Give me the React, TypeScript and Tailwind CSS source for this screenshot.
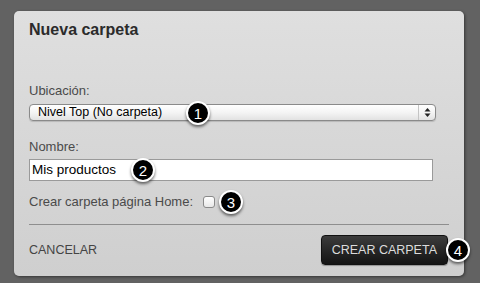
import React from 'react';

function Badge({ n, className }: { n: number; className: string }) {
  return (
    <span
      className={
        'absolute flex h-[24px] w-[24px] items-center justify-center rounded-full border-2 border-white bg-black text-[15px] leading-none text-white shadow-[0_2px_3px_rgba(0,0,0,0.55)] ' +
        className
      }
    >
      {n}
    </span>
  );
}

export default function App() {
  return (
    <div
      className="h-[283px] w-[480px] bg-[#626262] pt-[11px]"
      style={{ fontFamily: '"Liberation Sans", Arial, sans-serif' }}
    >
      <div className="ml-[14px] h-[265px] w-[450px] rounded-[5px] bg-gradient-to-b from-[#dfdfdf] to-[#cfcfcf] px-[15px] pt-[9px] shadow-[1px_1px_3px_rgba(0,0,0,0.45)]">
        <h1 className="text-[16px] font-bold leading-[19px] text-[#2b2b2b]">Nueva carpeta</h1>

        <div className="mt-[44px] text-[13px] leading-[16px] text-[#4a4a4a]">Ubicación:</div>
        <div className="relative mt-[5px] flex h-[17px] w-[407px] items-center rounded-[4px] border border-[#8a8a8a] bg-gradient-to-b from-white via-[#f4f4f4] to-[#e2e2e2] shadow-[0_1px_1px_rgba(0,0,0,0.15)]">
          <span className="flex-1 pl-[8px] text-[12.5px] leading-none text-black">Nivel Top (No carpeta)</span>
          <span className="flex h-full w-[17px] items-center justify-center border-l border-[#c4c4c4]">
            <svg width="7" height="11" viewBox="0 0 7 11">
              <path d="M3.5 1 L6.5 4.5 L0.5 4.5 Z" fill="#222" />
              <path d="M3.5 10 L6.5 6.5 L0.5 6.5 Z" fill="#222" />
            </svg>
          </span>
          <Badge n={1} className="left-[156px] top-[-4px]" />
        </div>

        <div className="mt-[18px] text-[13px] leading-[16px] text-[#4a4a4a]">Nombre:</div>
        <div className="relative mt-[4px] flex h-[22px] w-[404px] items-center border border-[#9a9a9a] bg-white">
          <span className="pl-[2px] text-[13.5px] leading-none text-black">Mis productos</span>
          <Badge n={2} className="left-[101px] top-[-2px]" />
        </div>

        <div className="mt-[13px] flex h-[16px] items-center text-[13px] leading-[16px] text-[#4a4a4a]">
          <span>Crear carpeta página Home:</span>
          <span className="ml-[10px] h-[12px] w-[12px] rounded-[3px] border border-[#8a8a8a] bg-gradient-to-b from-white to-[#e8e8e8]" />
          <span className="relative ml-[4px] h-[24px] w-[24px]">
            <Badge n={3} className="left-0 top-0" />
          </span>
        </div>

        <div className="mt-[14px] h-px w-[420px] bg-[#8e8e8e]" />

        <div className="mt-[10px] flex w-[420px] items-center justify-between">
          <span className="text-[12.5px] leading-none text-[#444]">CANCELAR</span>
          <div className="relative mr-[1px]">
            <button className="flex h-[30px] items-center rounded-[4px] border border-[#111] bg-gradient-to-b from-[#3c3c3c] to-[#141414] px-[10px] text-[12.5px] leading-none text-[#dcdcdc] shadow-[0_1px_1px_rgba(0,0,0,0.3)]">
              CREAR CARPETA
            </button>
            <Badge n={4} className="right-[-22px] top-[3px]" />
          </div>
        </div>
      </div>
    </div>
  );
}
